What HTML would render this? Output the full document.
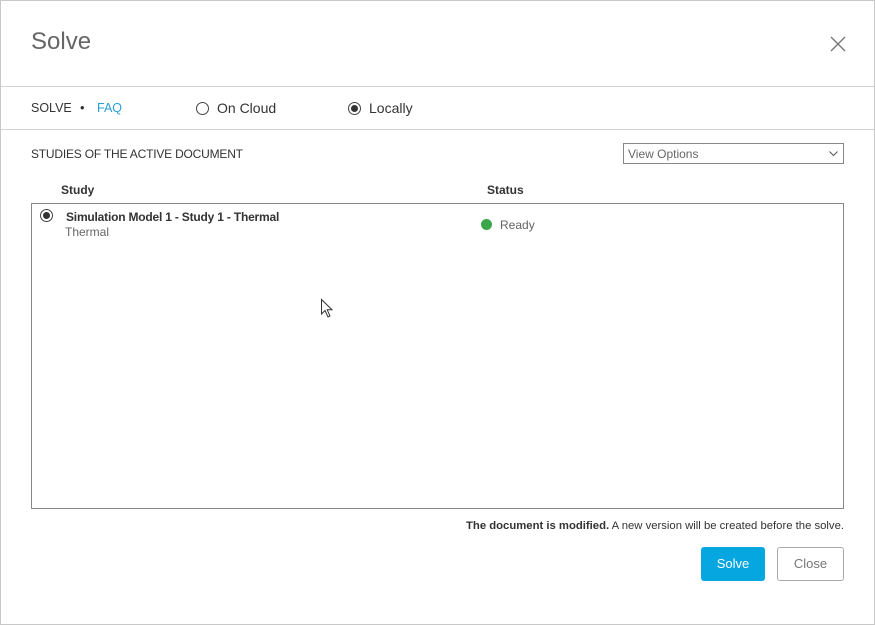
<!DOCTYPE html>
<html><head><meta charset="utf-8"><style>
*{margin:0;padding:0;box-sizing:border-box}
body{width:875px;height:625px;background:#fff;font-family:"Liberation Sans",Arial,sans-serif;position:relative;overflow:hidden;color:#333}
.a{position:absolute;white-space:nowrap}
.frame{position:absolute;left:0;top:0;width:875px;height:625px;border:1px solid #c8c8c8}
.hr{position:absolute;left:1px;width:873px;height:1px;background:#d2d2d2}
.radio{position:absolute;width:13px;height:13px;border:1px solid #444;border-radius:50%;background:#fff}
.radio.on::after{content:"";position:absolute;left:2px;top:2px;width:7px;height:7px;border-radius:50%;background:#333}
</style></head><body>
<div class="frame"></div>
<div class="a" style="left:31px;top:28px;font-size:24px;color:#666">Solve</div>
<svg class="a" style="left:830px;top:36px" width="16" height="16"><path d="M1 1L15 15M15 1L1 15" stroke="#777" stroke-width="1.4"/></svg>
<div class="hr" style="top:86px"></div>
<div class="a" style="left:31px;top:101px;font-size:12.5px;color:#333">SOLVE</div>
<div class="a" style="left:80px;top:100px;font-size:13px;color:#333">•</div>
<div class="a" style="left:97px;top:101px;font-size:12.5px;color:#2a9fd6">FAQ</div>
<div class="radio" style="left:196px;top:102px"></div>
<div class="a" style="left:217px;top:100px;font-size:14px;color:#333">On Cloud</div>
<div class="radio on" style="left:348px;top:102px"></div>
<div class="a" style="left:369px;top:100px;font-size:14px;color:#333">Locally</div>
<div class="hr" style="top:129px"></div>
<div class="a" style="left:31px;top:147px;font-size:12px;letter-spacing:-0.2px;color:#333">STUDIES OF THE ACTIVE DOCUMENT</div>
<div class="a" style="left:623px;top:143px;width:221px;height:21px;border:1px solid #888;font-size:12px;color:#666;padding:3px 0 0 4px">View Options
<svg style="position:absolute;right:5px;top:7px" width="9" height="6"><path d="M0.5 0.5L4.5 4.5L8.5 0.5" stroke="#555" fill="none"/></svg></div>
<div class="a" style="left:61px;top:183px;font-size:12px;font-weight:bold;color:#333">Study</div>
<div class="a" style="left:487px;top:183px;font-size:12px;font-weight:bold;color:#333">Status</div>
<div class="a" style="left:31px;top:203px;width:813px;height:306px;border:1px solid #888"></div>
<div class="radio on" style="left:40px;top:209px"></div>
<div class="a" style="left:66px;top:210px;font-size:12px;font-weight:bold;letter-spacing:-0.2px;color:#333">Simulation Model 1 - Study 1 - Thermal</div>
<div class="a" style="left:65px;top:225px;font-size:12px;color:#666">Thermal</div>
<div class="a" style="left:481px;top:219px;width:11px;height:11px;border-radius:50%;background:#3aa64a"></div>
<div class="a" style="left:500px;top:218px;font-size:12px;color:#666">Ready</div>
<svg class="a" style="left:320px;top:298px" width="14" height="22"><path d="M1.5 1.5L1.5 16L5 12.5L8 19L10 18L7.2 11.8L12 11.8Z" fill="#fff" stroke="#333" stroke-width="1"/></svg>
<div class="a" style="right:31px;top:520px;font-size:11.3px;color:#333"><b>The document is modified.</b> A new version will be created before the solve.</div>
<div class="a" style="left:701px;top:547px;width:64px;height:34px;background:#06a7e0;border-radius:3px;color:#fff;font-size:13px;text-align:center;line-height:34px">Solve</div>
<div class="a" style="left:777px;top:547px;width:67px;height:34px;background:#fff;border:1px solid #aaa;border-radius:3px;color:#777;font-size:13px;text-align:center;line-height:32px">Close</div>
</body></html>
